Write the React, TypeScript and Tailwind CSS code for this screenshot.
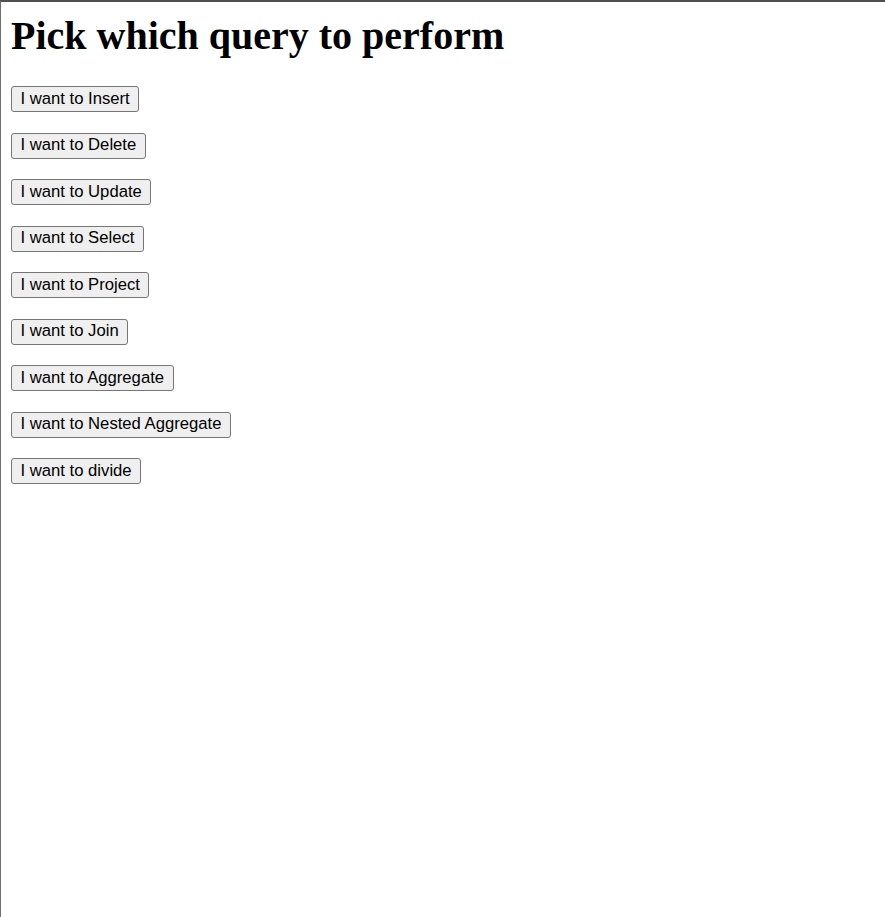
const queries = [
  'Insert',
  'Delete',
  'Update',
  'Select',
  'Project',
  'Join',
  'Aggregate',
  'Nested Aggregate',
  'divide',
];

export default function App() {
  return (
    <main className="min-h-screen border-t-2 border-l border-t-[#505050] border-l-[#6e6e6e] bg-white px-[10px] pt-[10px] pb-[10px] text-black">
      <h1 className="mb-[27px] pt-[1px] font-['Liberation_Serif',serif] text-[40px] font-bold leading-[46px]">
        Pick which query to perform
      </h1>
      <div className="flex flex-col items-start gap-[20.5px]">
        {queries.map((q) => (
          <button
            key={q}
            type="button"
            className="h-[26px] rounded-[3px] border border-[#767676] bg-[#efefef] px-[8.5px] font-['Liberation_Sans',Arial,sans-serif] text-[16.67px] leading-none text-black"
          >
            I want to {q}
          </button>
        ))}
      </div>
    </main>
  );
}
